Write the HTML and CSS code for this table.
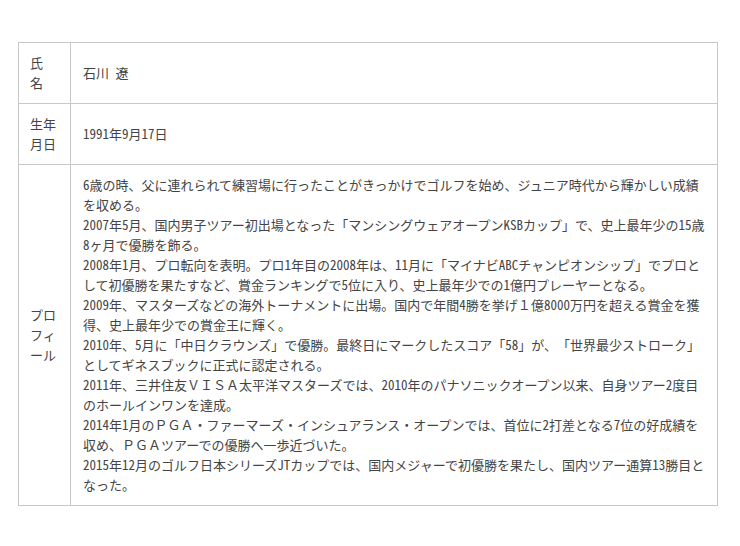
FILE: index.html
```html
<!DOCTYPE html>
<html lang="ja">
<head>
    <meta charset="UTF-8">
    <meta name="viewport" content="width=device-width, initial-scale=1.0">
    <title>プロフィール</title>
    <link rel="stylesheet" href="styles.css">
</head>
<body>
    <div class="wrap">
        <table class="profile">
            <tr>
                <th>氏　名</th>
                <td>石川 遼</td>
            </tr>
            <tr>
                <th>生年月日</th>
                <td>1991年9月17日</td>
            </tr>
            <tr>
                <th>プロフィール</th>
                <td>
                    6歳の時、父に連れられて練習場に行ったことがきっかけでゴルフを始め、ジュニア時代から輝かしい成績を収める。<br>
                    2007年5月、国内男子ツアー初出場となった「マンシングウェアオープンKSBカップ」で、史上最年少の15歳8ヶ月で優勝を飾る。<br>
                    2008年1月、プロ転向を表明。プロ1年目の2008年は、11月に「マイナビABCチャンピオンシップ」でプロとして初優勝を果たすなど、賞金ランキングで5位に入り、史上最年少での1億円プレーヤーとなる。<br>
                    2009年、マスターズなどの海外トーナメントに出場。国内で年間4勝を挙げ<span class="zen">１</span>億8000万円を超える賞金を獲得、史上最年少での賞金王に輝く。<br>
                    2010年、5月に「中日クラウンズ」で優勝。最終日にマークしたスコア「58」が、「世界最少ストローク」としてギネスブックに正式に認定される。<br>
                    2011年、三井住友<span class="zen">ＶＩＳＡ</span>太平洋マスターズでは、2010年のパナソニックオープン以来、自身ツアー2度目のホールインワンを達成。<br>
                    2014年1月の<span class="zen">ＰＧＡ</span>・ファーマーズ・インシュアランス・オープンでは、首位に2打差となる7位の好成績を収め、<span class="zen">ＰＧＡ</span>ツアーでの優勝へ一歩近づいた。<br>
                    2015年12月のゴルフ日本シリーズJTカップでは、国内メジャーで初優勝を果たし、国内ツアー通算13勝目となった。
                </td>
            </tr>
        </table>
    </div>
</body>
</html>
```

FILE: styles.css
```css
body {
    margin: 0;
    background-color: #fff;
    font-family: "Noto Sans CJK JP", sans-serif;
    font-size: 13px;
    font-feature-settings: "hwid" 1;
    text-spacing-trim: space-all;
    color: #444;
}
.wrap {
    padding: 42px 22px 0 18px;
}
.profile {
    width: 700px;
    border-collapse: collapse;
    table-layout: fixed;
}
.profile th,
.profile td {
    border: 1px solid #c8c8c8;
    padding: 10px 11px;
    line-height: 20px;
    vertical-align: middle;
    text-align: left;
    font-weight: normal;
}
.profile th {
    width: 29px;
}
.profile td {
    padding: 10px 8px 10px 12px;
}
/* 全角英数字はそのまま全角で表示 */
.zen {
    font-feature-settings: "fwid" 1;
}
```
